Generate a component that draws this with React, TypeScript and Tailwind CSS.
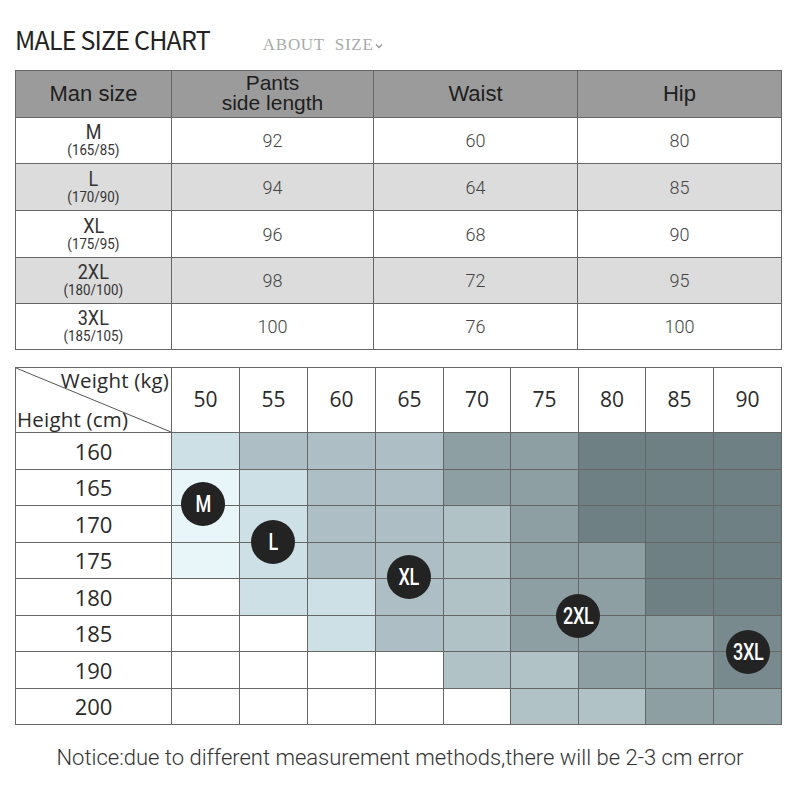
import React from 'react';

type Shade = 'W' | 'A' | 'B' | 'C' | 'D' | 'E' | 'F' | 'G';

const shadeClass: Record<Shade, string> = {
  W: 'bg-white',
  A: 'bg-[#e8f5f9]',
  B: 'bg-[#cde0e5]',
  C: 'bg-[#adbfc4]',
  D: 'bg-[#b1c2c7]',
  E: 'bg-[#8e9fa3]',
  F: 'bg-[#6f8084]',
  G: 'bg-[#788a8e]',
};

const sizeRows = [
  { size: 'M', note: '(165/85)', pants: 92, waist: 60, hip: 80, grey: false },
  { size: 'L', note: '(170/90)', pants: 94, waist: 64, hip: 85, grey: true },
  { size: 'XL', note: '(175/95)', pants: 96, waist: 68, hip: 90, grey: false },
  { size: '2XL', note: '(180/100)', pants: 98, waist: 72, hip: 95, grey: true },
  { size: '3XL', note: '(185/105)', pants: 100, waist: 76, hip: 100, grey: false },
];

const weights = [50, 55, 60, 65, 70, 75, 80, 85, 90];

const heightRows: { h: number; cells: Shade[] }[] = [
  { h: 160, cells: ['B', 'C', 'C', 'C', 'E', 'E', 'F', 'F', 'F'] },
  { h: 165, cells: ['A', 'B', 'C', 'C', 'E', 'E', 'F', 'F', 'F'] },
  { h: 170, cells: ['A', 'B', 'C', 'C', 'D', 'E', 'F', 'F', 'F'] },
  { h: 175, cells: ['A', 'B', 'C', 'C', 'D', 'E', 'E', 'F', 'F'] },
  { h: 180, cells: ['W', 'B', 'B', 'C', 'D', 'E', 'E', 'F', 'F'] },
  { h: 185, cells: ['W', 'W', 'B', 'C', 'D', 'E', 'E', 'E', 'G'] },
  { h: 190, cells: ['W', 'W', 'W', 'W', 'D', 'D', 'E', 'E', 'G'] },
  { h: 200, cells: ['W', 'W', 'W', 'W', 'W', 'D', 'D', 'E', 'E'] },
];

// badge centres, relative to the chart's top-left corner
const badges = [
  { label: 'M', x: 188, y: 137 },
  { label: 'L', x: 258, y: 175 },
  { label: 'XL', x: 394, y: 210 },
  { label: '2XL', x: 563, y: 249 },
  { label: '3XL', x: 733, y: 285 },
];

const Badge: React.FC<{ label: string; x: number; y: number }> = ({ label, x, y }) => (
  <div
    className="absolute w-[44px] h-[44px] -ml-[22px] -mt-[22px] rounded-full bg-[#232323] flex items-center justify-center"
    style={{ left: x, top: y }}
  >
    <span className="text-white text-[24px] font-medium font-['Roboto',sans-serif] scale-x-75 tracking-[-0.5px] leading-none">
      {label}
    </span>
  </div>
);

export default function App() {
  return (
    <div className="w-[800px] h-[800px] bg-white relative">
      <div className="flex items-baseline h-[70px] pt-[23px] pl-[15px]">
        <h1 className="text-[25px] leading-[32px] text-[#222] font-['Noto_Sans_CJK_SC',sans-serif] tracking-[-0.8px]">
          MALE SIZE CHART
        </h1>
        <span className="ml-[53px] text-[17px] text-[#aaa] font-['Liberation_Serif',serif] tracking-[0.7px] flex items-center">
          ABOUT&nbsp; SIZE
          <svg width="8" height="6" viewBox="0 0 8 6" className="ml-[1px] mt-[2px]">
            <path d="M1 1.5 L4 4.5 L7 1.5" fill="none" stroke="#999" strokeWidth="1.4" />
          </svg>
        </span>
      </div>

      {/* measurement table */}
      <div className="ml-[15px] w-[767px] grid grid-cols-[155px_201px_203px_203px] grid-rows-[46px_45px_46px_46px_45px_45px] gap-px p-px bg-[#666] font-['Liberation_Sans',sans-serif]">
        <div className="bg-[#9b9b9b] flex items-center justify-center text-[22px] text-[#1e1e1e] pb-[2px]">Man size</div>
        <div className="bg-[#9b9b9b] flex flex-col items-center justify-center text-[21px] leading-[20px] text-[#1e1e1e] pb-[3px]">
          <span>Pants</span>
          <span>side length</span>
        </div>
        <div className="bg-[#9b9b9b] flex items-center justify-center text-[22px] text-[#1e1e1e] pb-[2px]">Waist</div>
        <div className="bg-[#9b9b9b] flex items-center justify-center text-[22px] text-[#1e1e1e] pb-[2px]">Hip</div>
        {sizeRows.map(r => {
          const bg = r.grey ? 'bg-[#dcdcdc]' : 'bg-white';
          return (
            <React.Fragment key={r.size}>
              <div className={`${bg} flex flex-col items-center justify-center font-['Roboto',sans-serif] text-[#333]`}>
                <span className="text-[20px] leading-[19px] scale-x-90">{r.size}</span>
                <span className="text-[14px] leading-[16px] scale-x-95">{r.note}</span>
              </div>
              <div className={`${bg} flex items-center justify-center text-[18px] text-[#444] font-['Roboto',sans-serif] font-light`}>{r.pants}</div>
              <div className={`${bg} flex items-center justify-center text-[18px] text-[#444] font-['Roboto',sans-serif] font-light`}>{r.waist}</div>
              <div className={`${bg} flex items-center justify-center text-[18px] text-[#444] font-['Roboto',sans-serif] font-light`}>{r.hip}</div>
            </React.Fragment>
          );
        })}
      </div>

      {/* weight / height chart */}
      <div className="relative mt-[17px] ml-[15px] w-[767px]">
        <div className="grid grid-cols-[155px_67px_67px_67px_67px_66px_67px_66px_67px_67px] grid-rows-[64px_36px_35px_36px_35px_36px_35px_36px_35px] gap-px p-px bg-[#666] font-['Open_Sans',sans-serif] text-[#2a2a2a]">
          <div className="bg-white relative">
            <svg className="absolute inset-0" width="155" height="64" viewBox="0 0 155 64">
              <line x1="0" y1="0" x2="155" y2="64" stroke="#555" strokeWidth="1" />
            </svg>
            <span className="absolute right-[2px] -top-[1px] text-[20.5px] leading-[26px] tracking-[0.2px]">Weight (kg)</span>
            <span className="absolute left-[1px] bottom-[0px] text-[20.5px] leading-[26px] tracking-[0.2px]">Height (cm)</span>
          </div>
          {weights.map(w => (
            <div key={w} className="bg-white flex items-center justify-center text-[21px]">{w}</div>
          ))}
          {heightRows.map(row => (
            <React.Fragment key={row.h}>
              <div className="bg-white flex items-center justify-center text-[22px]">{row.h}</div>
              {row.cells.map((s, i) => (
                <div key={i} className={shadeClass[s]} />
              ))}
            </React.Fragment>
          ))}
        </div>
        {badges.map(b => (
          <Badge key={b.label} {...b} />
        ))}
      </div>

      <p className="mt-[16px] text-center text-[22px] text-[#333] font-['Roboto',sans-serif] font-light">
        Notice:due to different measurement methods,there will be 2-3 cm error
      </p>
    </div>
  );
}
